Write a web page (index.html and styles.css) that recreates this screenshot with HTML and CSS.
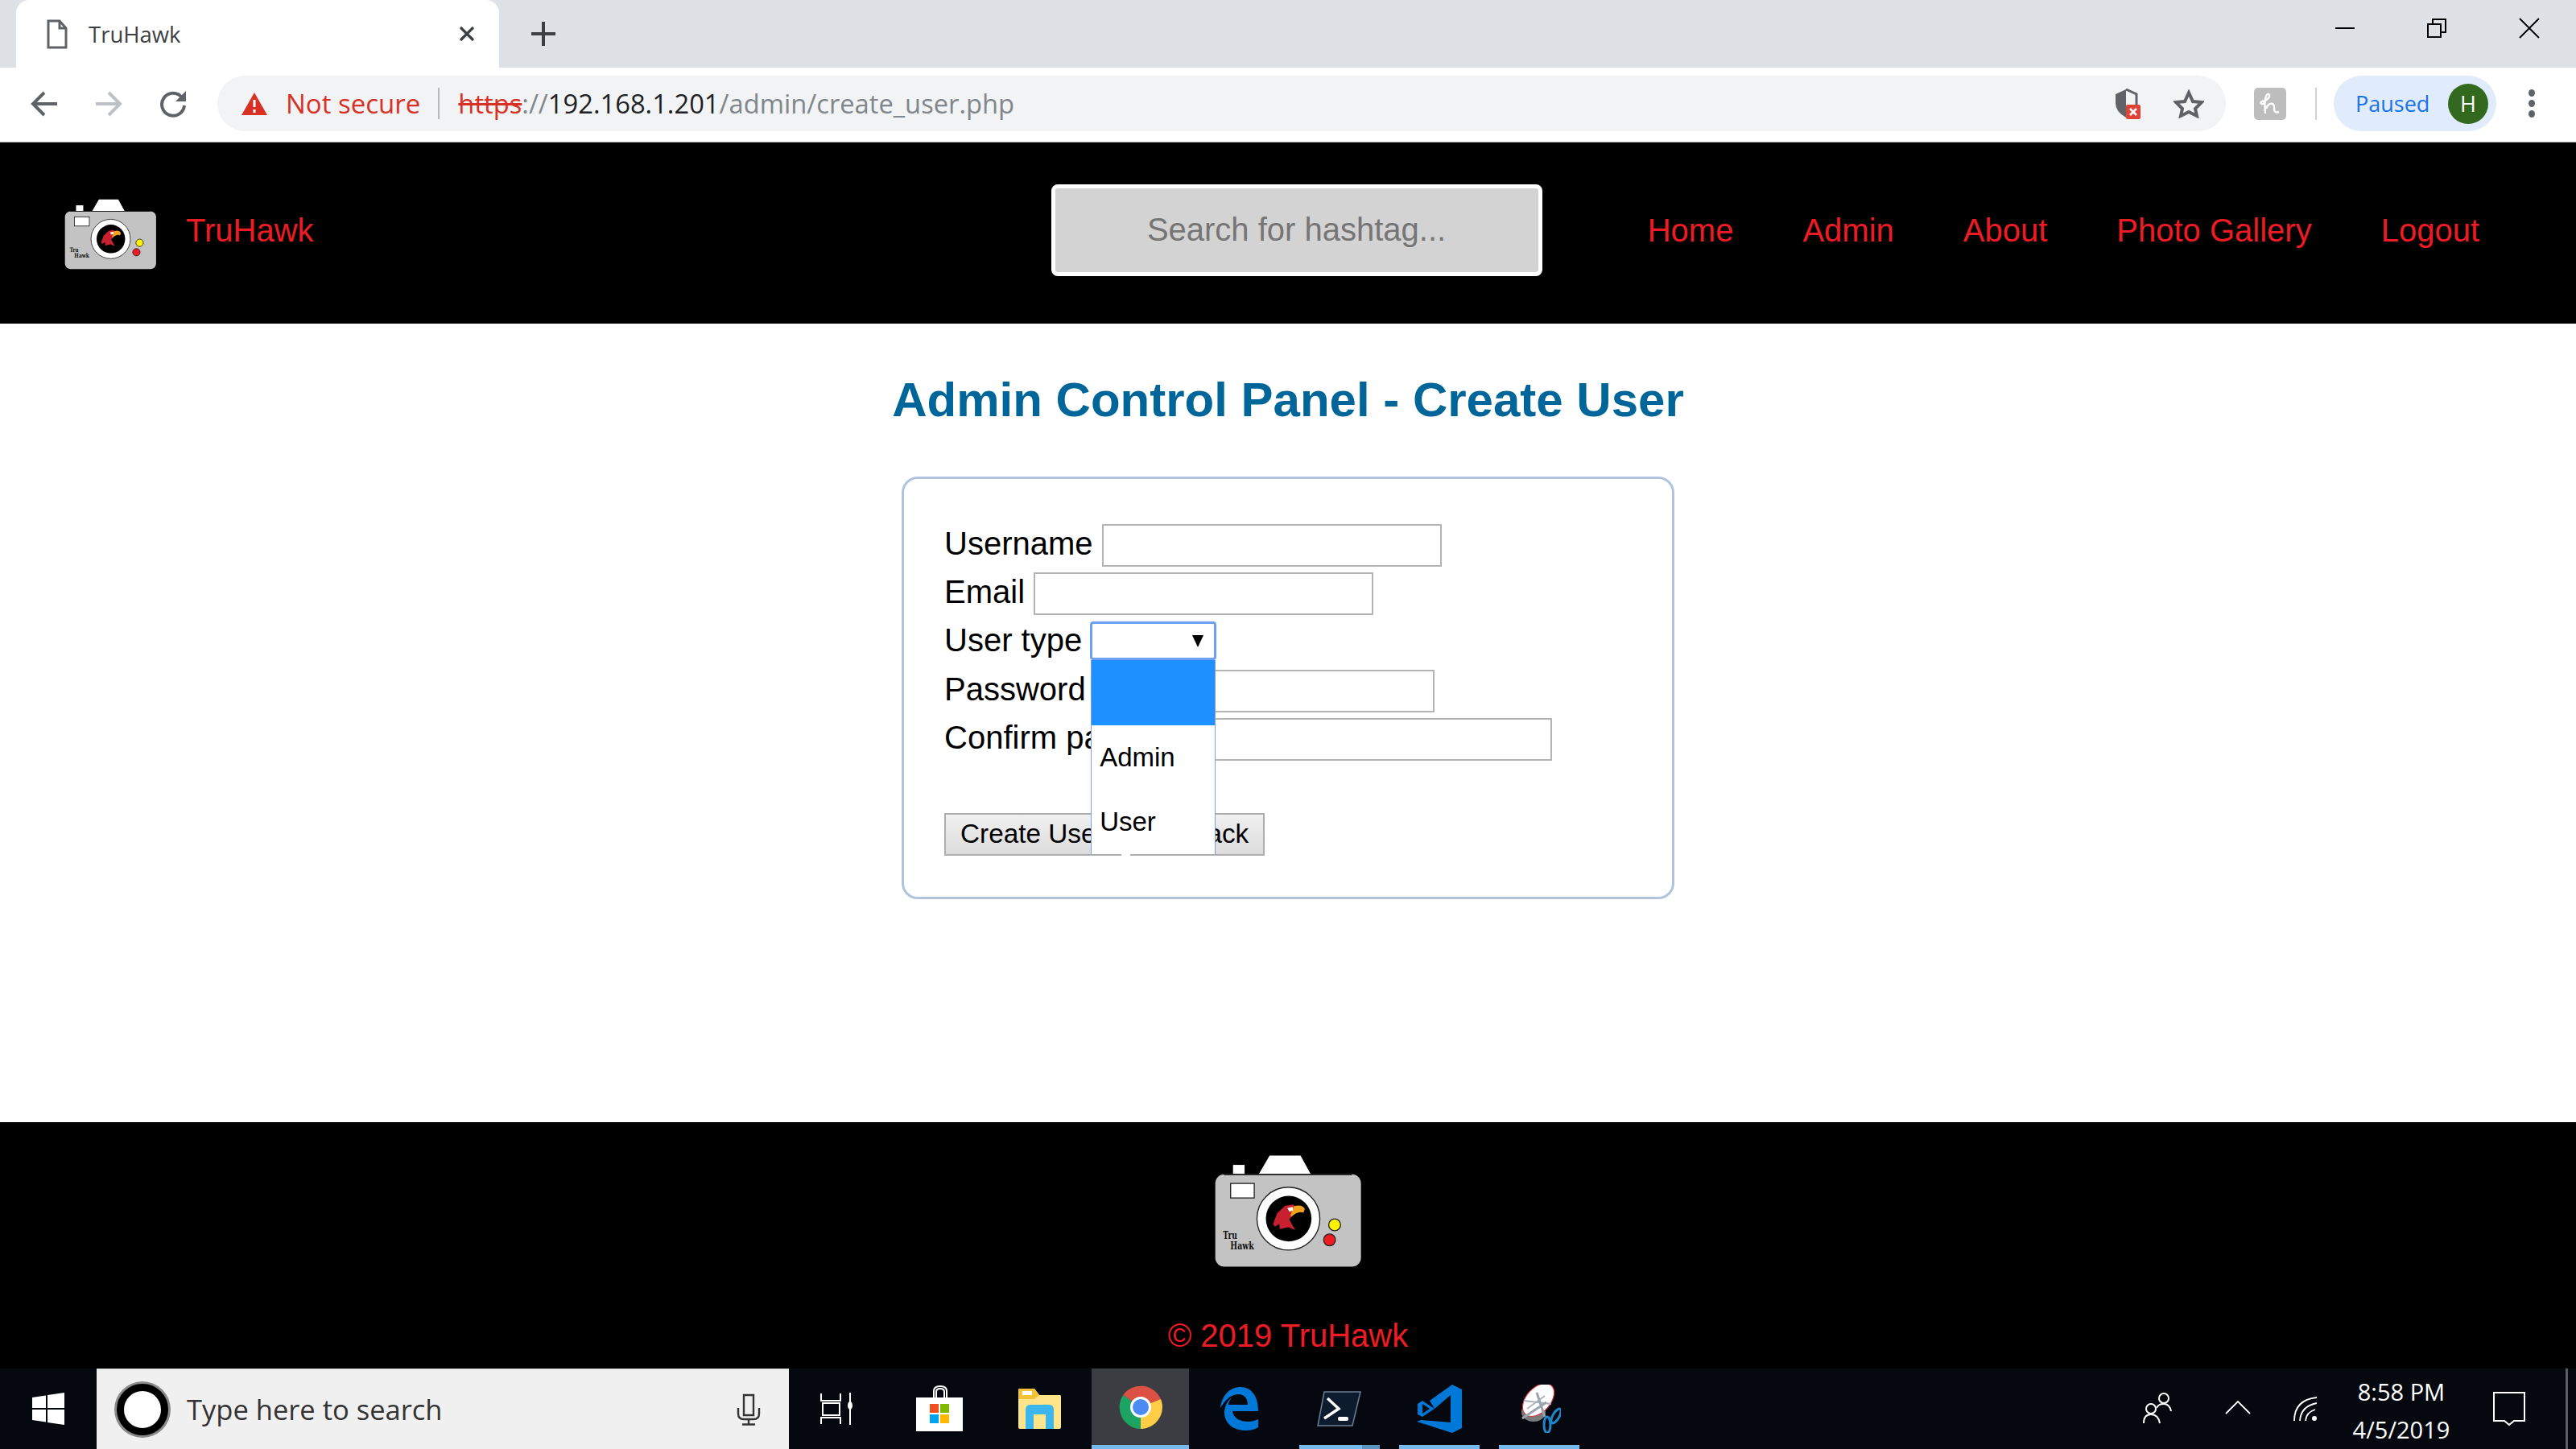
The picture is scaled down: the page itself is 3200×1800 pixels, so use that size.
FILE: index.html
```html
<!DOCTYPE html>
<html lang="en">
<head>
<meta charset="utf-8">
<title>TruHawk</title>
<link rel="stylesheet" href="styles.css">
</head>
<body>

<div class="tabstrip">
  <div class="tab">
    <svg class="tab-doc" viewBox="0 0 26 37" width="26" height="37"><path d="M2 2H16L24 11V35H2Z M16 2V11H24" fill="none" stroke="#5f6368" stroke-width="3"/></svg>
    <span class="tab-title">TruHawk</span>
    <svg class="tab-close" viewBox="0 0 20 20" width="20" height="20"><path d="M2 2L18 18M18 2L2 18" stroke="#3c4043" stroke-width="3.2"/></svg>
  </div>
  <svg class="new-tab" viewBox="0 0 30 30" width="30" height="30"><path d="M15 0V30M0 15H30" stroke="#3c4043" stroke-width="4"/></svg>
  <div class="win-controls">
    <svg viewBox="0 0 24 24" width="24" height="24"><path d="M0 12H24" stroke="#000" stroke-width="2"/></svg>
    <svg viewBox="0 0 24 24" width="24" height="24"><path d="M1 7H17V23H1ZM7 7V1H23V17H17" fill="none" stroke="#000" stroke-width="2"/></svg>
    <svg viewBox="0 0 26 26" width="26" height="26"><path d="M1 1L25 25M25 1L1 25" stroke="#000" stroke-width="1.8"/></svg>
  </div>
</div>

<div class="toolbar">
  <div class="nav-buttons">
    <svg viewBox="0 0 34 32" width="34" height="32"><path d="M33 16H4M17 2L3 16L17 30" fill="none" stroke="#5f6368" stroke-width="4"/></svg>
    <svg viewBox="0 0 34 32" width="34" height="32"><path d="M1 16H30M17 2L31 16L17 30" fill="none" stroke="#bdc1c6" stroke-width="4"/></svg>
    <svg viewBox="0 0 34 34" width="34" height="34"><path d="M28 9A14 14 0 1 0 31 19" fill="none" stroke="#5f6368" stroke-width="4"/><path d="M33 1V14H20Z" fill="#5f6368"/></svg>
  </div>
  <div class="omnibox">
    <svg class="warn" viewBox="0 0 32 28" width="32" height="28"><path d="M16 0L32 28H0Z" fill="#d93025"/><path d="M16 9V18M16 21V25" stroke="#fff" stroke-width="3"/></svg>
    <span class="not-secure">Not secure</span>
    <span class="omni-div"></span>
    <span class="url"><span class="scheme">https</span><span class="url-dim">://</span><span class="host">192.168.1.201</span><span class="url-dim">/admin/create_user.php</span></span>
    <svg class="shield" viewBox="0 0 32 38" width="32" height="38"><path d="M14 1L1 7V18Q1 29 14 36Z" fill="#5f6368"/><path d="M14 1L27 7V20" fill="none" stroke="#5f6368" stroke-width="3"/><rect x="14" y="20" width="18" height="18" rx="2" fill="#e04335"/><path d="M19 25L27 33M27 25L19 33" stroke="#fff" stroke-width="2.6"/></svg>
    <svg class="star" viewBox="0 0 38 36" width="38" height="36"><path d="M19 4L24 15L35 16L27 24L29 33L19 28L9 33L11 24L3 16L14 15Z" fill="none" stroke="#5f6368" stroke-width="4"/></svg>
  </div>
  <svg class="ext" viewBox="0 0 40 40" width="40" height="40"><rect width="40" height="40" rx="5" fill="#bdbdbd"/><path d="M14 32C13 20 13 10 17 8C21 7 20 15 10 17C7 18 9 22 13 19M15 26C18 18 25 18 25 24C25 28 25 32 31 30" fill="none" stroke="#fff" stroke-width="2.4"/></svg>
  <span class="tool-div"></span>
  <div class="paused">
    <span class="paused-text">Paused</span>
    <span class="avatar">H</span>
  </div>
  <div class="kebab"><i></i><i></i><i></i></div>
</div>

<header class="site-header">
  <svg class="header-logo" viewBox="200 100 560 428">
    <polygon points="410,107 525,107 563,176 370,176" fill="#fff"/>
    <rect x="274" y="142" width="43" height="34" fill="#fff"/>
    <rect x="208" y="177" width="542" height="344" rx="34" fill="#c3c3c3"/>
    <path d="M240 178H716" stroke="#222" stroke-width="5"/>
    <rect x="265" y="211" width="88" height="54" fill="#fff" stroke="#222" stroke-width="4"/>
    <circle cx="480" cy="342" r="117" fill="#fff" stroke="#222" stroke-width="4"/>
    <circle cx="481" cy="342" r="85" fill="#000"/>
    <path d="M423 362L438 322L468 294L498 289L506 300L494 332L483 345L505 384L480 374L448 381L446 362L430 372Z" fill="#c8202f"/>
    <path d="M500 296Q530 286 541 306L536 320Q515 312 490 336L488 328Z" fill="#f4a11d"/>
    <path d="M476 303L496 298L497 312L484 316Z" fill="#fff"/>
    <circle cx="652" cy="365" r="22" fill="#fff200" stroke="#222" stroke-width="4"/>
    <circle cx="633" cy="421" r="22" fill="#ed1c24" stroke="#222" stroke-width="4"/>
    <text x="237" y="418" class="logo-text" textLength="52" lengthAdjust="spacingAndGlyphs">Tru</text>
    <text x="264" y="455" class="logo-text" textLength="88" lengthAdjust="spacingAndGlyphs">Hawk</text>
  </svg>
  <a class="brand">TruHawk</a>
  <div class="search">Search for hashtag...</div>
  <nav class="site-nav">
    <a>Home</a><a>Admin</a><a>About</a><a>Photo Gallery</a><a>Logout</a>
  </nav>
</header>

<main class="content">
  <h1 class="title">Admin Control Panel - Create User</h1>
  <form class="panel">
    <div class="row"><label>Username</label><span class="field"></span></div>
    <div class="row"><label>Email</label><span class="field"></span></div>
    <div class="row"><label>User type</label>
      <div class="select">
        <span class="arrow"></span>
        <div class="dropdown">
          <div class="option selected"></div>
          <div class="option">Admin</div>
          <div class="option">User</div>
        </div>
      </div>
    </div>
    <div class="row"><label>Password</label><span class="field"></span></div>
    <div class="row"><label>Confirm password</label><span class="field"></span></div>
    <div class="actions">
      <button type="button" class="btn">Create User</button>
      <button type="button" class="btn">Go Back</button>
    </div>
  </form>
</main>

<footer class="site-footer">
  <svg class="footer-logo" viewBox="200 100 560 428">
    <polygon points="410,107 525,107 563,176 370,176" fill="#fff"/>
    <rect x="274" y="142" width="43" height="34" fill="#fff"/>
    <rect x="208" y="177" width="542" height="344" rx="34" fill="#c3c3c3"/>
    <path d="M240 178H716" stroke="#222" stroke-width="5"/>
    <rect x="265" y="211" width="88" height="54" fill="#fff" stroke="#222" stroke-width="4"/>
    <circle cx="480" cy="342" r="117" fill="#fff" stroke="#222" stroke-width="4"/>
    <circle cx="481" cy="342" r="85" fill="#000"/>
    <path d="M423 362L438 322L468 294L498 289L506 300L494 332L483 345L505 384L480 374L448 381L446 362L430 372Z" fill="#c8202f"/>
    <path d="M500 296Q530 286 541 306L536 320Q515 312 490 336L488 328Z" fill="#f4a11d"/>
    <path d="M476 303L496 298L497 312L484 316Z" fill="#fff"/>
    <circle cx="652" cy="365" r="22" fill="#fff200" stroke="#222" stroke-width="4"/>
    <circle cx="633" cy="421" r="22" fill="#ed1c24" stroke="#222" stroke-width="4"/>
    <text x="237" y="418" class="logo-text" textLength="52" lengthAdjust="spacingAndGlyphs">Tru</text>
    <text x="264" y="455" class="logo-text" textLength="88" lengthAdjust="spacingAndGlyphs">Hawk</text>
  </svg>
  <p class="copy">© 2019 TruHawk</p>
</footer>

<div class="taskbar">
  <div class="start">
    <svg viewBox="0 0 40 40" width="40" height="40"><path d="M0 6L17 3.500V19H0ZM19 3L40 0V19H19ZM0 21H17V36.500L0 34ZM19 21H40V40L19 37Z" fill="#fff"/></svg>
  </div>
  <div class="task-search">
    <span class="cortana"></span>
    <span class="task-search-text">Type here to search</span>
    <svg class="mic" viewBox="0 0 30 40" width="30" height="40"><path d="M9 2H21V27H9ZM2 18V25Q2 32 9 32H21Q28 32 28 25V18M15 32V38M7 38.500H23" fill="none" stroke="#333" stroke-width="2.400"/></svg>
  </div>
  <div class="task-tile first">
    <svg viewBox="0 0 42 40" width="42" height="40"><path d="M2 1V10H26V1M2 39V31H26V39M4 13H25V28H4ZM38 0V40" fill="none" stroke="#fff" stroke-width="2"/><ellipse cx="38" cy="16" rx="3" ry="5" fill="#fff"/></svg>
  </div>
  <div class="task-tile">
    <svg viewBox="0 0 60 60" width="60" height="60"><path d="M22 16V8Q22 2 30 2Q38 2 38 8V16M25 16V9Q25 5 30 5Q35 5 35 9V16" fill="none" stroke="#fff" stroke-width="2"/><path d="M0 16H58V58H0Z" fill="#fff"/><rect x="17" y="24" width="11" height="11" fill="#f25022"/><rect x="30" y="24" width="11" height="11" fill="#7fba00"/><rect x="17" y="37" width="11" height="11" fill="#00a4ef"/><rect x="30" y="37" width="11" height="11" fill="#ffb900"/></svg>
  </div>
  <div class="task-tile">
    <svg viewBox="0 0 54 50" width="54" height="50"><path d="M0 2Q0 0 2 0H20L26 8H52Q53 8 53 10V48Q53 50 51 50H2Q0 50 0 48Z" fill="#ffe48a"/><path d="M0 2Q0 0 2 0H20L26 8L20 13H0Z" fill="#f3c237"/><rect x="5" y="3" width="12" height="5" fill="#fff"/><path d="M9 50V26Q9 20 15 20H38Q44 20 44 26V50H34V32H19V50Z" fill="#3bb6ee"/></svg>
  </div>
  <div class="task-tile active">
    <svg viewBox="0 0 56 56" width="56" height="56"><path d="M28 28L6.200 13A27 27 0 0 1 53 18Z" fill="#dd5044"/><path d="M28 28L6.200 13A27 27 0 0 0 28 55Z" fill="#1da462"/><path d="M28 28L53 18A27 27 0 0 1 28 55Z" fill="#ffcd46"/><circle cx="28" cy="28" r="13" fill="#fff"/><circle cx="28" cy="28" r="10" fill="#4c8bf5"/></svg>
  </div>
  <div class="task-tile">
    <svg viewBox="0 0 50 54" width="50" height="54"><path d="M2 26C4 8 16 0 27 0C41 0 49 12 49 30H17C18 39 27 43 36 43C41 43 45 42 49 40V50C44 53 39 54 33 54C15 54 6 42 7 30C8 22 11 17 16 13C13 17 12 20 12 22H36C36 14 31 9 25 9C15 9 8 16 2 26Z" fill="#0078d7"/></svg>
  </div>
  <div class="task-tile open stacked">
    <svg viewBox="0 0 56 44" width="56" height="44"><path d="M10 1H55L45 43H2Z" fill="#0d1b2f" stroke="#6e7f95" stroke-width="1.500"/><path d="M14 9L28 22L10 34" fill="none" stroke="#fff" stroke-width="3.500"/><rect x="27" y="32" width="13" height="5" rx="2" fill="#fff"/></svg>
  </div>
  <div class="task-tile open">
    <svg viewBox="-3 0 60 60" width="60" height="60"><path d="M44 0L56 6V54L44 60L0 46L5 44L42 47V13L22 30L7 40L1 37V24L7 20L22 30L16 20Z" fill="#0078d7"/><path d="M16 30L7 24V36ZM42 18L26 30L42 40Z" fill="#05090f"/></svg>
  </div>
  <div class="task-tile open">
    <svg viewBox="0 0 56 60" width="56" height="60"><ellipse cx="22" cy="34" rx="15" ry="12" fill="#7c7c7c"/><ellipse cx="28" cy="19" rx="24" ry="15" transform="rotate(-48 28 19)" fill="#fff" stroke="#d9333f" stroke-width="1.200"/><path d="M10 20L44 24M14 30L36 14" stroke="#aab4bc" stroke-width="2"/><path d="M26 10L36 40M8 42L38 22" stroke="#9aa4ab" stroke-width="3"/><ellipse cx="39" cy="50" rx="4" ry="10" fill="none" stroke="#1d87c9" stroke-width="3"/><ellipse cx="50" cy="39" rx="4" ry="10" transform="rotate(30 50 39)" fill="none" stroke="#1d87c9" stroke-width="3"/></svg>
  </div>
  <div class="tray">
    <svg class="tray-people" viewBox="0 0 36 40" width="36" height="40"><circle cx="26" cy="8" r="6" fill="none" stroke="#fff" stroke-width="2"/><path d="M17 20Q19 15 26 15Q33 15 35 24" fill="none" stroke="#fff" stroke-width="2"/><circle cx="10" cy="21" r="6" fill="none" stroke="#fff" stroke-width="2"/><path d="M1 39Q1 28 10 28Q19 28 21 39" fill="none" stroke="#fff" stroke-width="2"/></svg>
    <svg class="tray-chevron" viewBox="0 0 32 18" width="32" height="18"><path d="M1 17L16 2L31 17" fill="none" stroke="#fff" stroke-width="1.800"/></svg>
    <svg class="tray-wifi" viewBox="0 0 30 30" width="30" height="30"><path d="M2 30Q2 4 30 1M9 30Q10 12 30 8M16 30Q17 19 28 16" fill="none" stroke="#fff" stroke-width="1.800"/><circle cx="27" cy="27" r="3" fill="#fff"/></svg>
    <div class="clock"><span>8:58 PM</span><span>4/5/2019</span></div>
    <svg class="tray-note" viewBox="0 0 40 42" width="40" height="42"><path d="M1 1H39V36H26L20 41L14 36H1Z" fill="none" stroke="#fff" stroke-width="2"/></svg>
    <span class="show-desktop"></span>
  </div>
</div>
</body>
</html>
```

FILE: styles.css
```css
* { box-sizing: border-box; }
html, body { margin: 0; padding: 0; }
body {
  width: 3200px;
  height: 1800px;
  display: flex;
  flex-direction: column;
  overflow: hidden;
  font-family: "Liberation Sans", Arial, sans-serif;
  background: #fff;
}
.logo-text { font-family: "DejaVu Serif", serif; font-weight: 700; font-size: 36px; fill: #111; }

/* Browser chrome */
.tabstrip {
  height: 84px;
  flex: none;
  background: #dee1e6;
  display: flex;
  align-items: center;
}
.tab {
  width: 600px;
  height: 84px;
  margin-left: 20px;
  background: #fff;
  border-radius: 16px 16px 0 0;
  display: flex;
  align-items: center;
  padding-left: 38px;
}
.tab-title {
  margin-left: 26px;
  font-family: "Open Sans", sans-serif;
  font-size: 27.500px;
  color: #3c4043;
}
.tab-close { margin-left: auto; margin-right: 30px; }
.new-tab { margin-left: 40px; }
.win-controls {
  margin-left: auto;
  display: flex;
  align-items: center;
  gap: 90px;
  margin-right: 45px;
  margin-top: -14px;
}
.toolbar {
  height: 93px;
  flex: none;
  background: #fff;
  border-bottom: 1px solid #b5b5b5;
  display: flex;
  align-items: center;
}
.nav-buttons {
  width: 270px;
  flex: none;
  display: flex;
  align-items: center;
  gap: 46px;
  padding-left: 38px;
  margin-top: -3px;
}
.omnibox {
  width: 2495px;
  height: 69px;
  flex: none;
  margin-top: -3px;
  background: #f1f3f4;
  border-radius: 35px;
  display: flex;
  align-items: center;
  padding-left: 30px;
  font-family: "Open Sans", sans-serif;
  font-size: 33px;
}
.not-secure { margin-left: 23px; color: #d93025; }
.omni-div { width: 2px; height: 39px; background: #b5b8bc; margin: 0 23px 0 22px; }
.url { color: #80868b; font-size: 32.700px; }
.scheme { color: #d93025; text-decoration: line-through; }
.url-dim { color: #80868b; }
.host { color: #202124; }
.shield { margin-left: auto; margin-right: 41px; }
.star { margin-right: 27px; }
.ext { margin-left: 35px; margin-top: -3px; flex: none; }
.tool-div { width: 2px; height: 40px; margin: -3px 21px 0 36px; background: #d0d2d5; }
.paused {
  width: 202px;
  height: 69px;
  margin-top: -3px;
  background: #e0ecfb;
  border-radius: 35px;
  display: flex;
  align-items: center;
  padding-left: 27px;
  font-family: "Open Sans", sans-serif;
  font-size: 27px;
  color: #1a73e8;
}
.avatar {
  width: 50px;
  height: 50px;
  margin-left: auto;
  margin-right: 10px;
  border-radius: 50%;
  background: #33691e;
  color: #fff;
  font-size: 27px;
  display: flex;
  align-items: center;
  justify-content: center;
}
.kebab {
  margin-left: 40px;
  margin-top: -3px;
  display: flex;
  flex-direction: column;
  gap: 4px;
}
.kebab i { display: block; width: 8px; height: 9px; border-radius: 50%; background: #5f6368; }

/* Site header */
.site-header {
  height: 225px;
  flex: none;
  background: #000;
  display: flex;
  align-items: center;
  padding: 0 120px 6px 79px;
  font-size: 40px;
  color: #ed1c24;
}
.header-logo { width: 117px; height: 90px; margin-top: 8px; flex: none; }
.brand { margin-left: 35px; }
.search {
  width: 610px;
  height: 114px;
  margin-left: 916px;
  margin-bottom: 2px;
  background: #d3d3d3;
  border: 5px solid #fff;
  border-radius: 8px;
  color: #757575;
  display: flex;
  align-items: center;
  justify-content: center;
}
.site-nav { margin-left: auto; display: flex; gap: 86px; }

/* Content */
.content {
  flex: 1;
  background: #fff;
  padding-top: 60px;
}
.title {
  margin: 0;
  text-align: center;
  font-size: 60px;
  line-height: 69px;
  font-weight: 700;
  color: #006699;
}
.panel {
  width: 960px;
  height: 525px;
  margin: 61px auto 0;
  border: 3px solid #b0c4de;
  border-radius: 20px;
  padding: 52px 50px 0;
  font-size: 40px;
  color: #000;
}
.row { height: 60.400px; display: flex; align-items: center; }
.row label { margin-top: -4px; }
.field {
  width: 422px;
  height: 53px;
  margin-left: 11px;
  background: #fff;
  border: 2px solid #b4b4b4;
}
.select {
  position: relative;
  width: 157px;
  height: 48px;
  margin-left: 10px;
  margin-top: -3px;
  background: #fff;
  border: 3px solid #6ea0f2;
  border-radius: 4px;
}
.arrow {
  position: absolute;
  right: 13px;
  top: 14px;
  border-style: solid;
  border-width: 15px 7px 0;
  border-color: #000 transparent transparent;
}
.dropdown {
  position: absolute;
  left: -2px;
  top: 45px;
  width: 155px;
  background: #fff;
  border-left: 1px solid #7c9fe0;
  border-right: 1px solid #7c9fe0;
  font-size: 33px;
  z-index: 2;
}
.option { height: 80px; padding-left: 10px; display: flex; align-items: center; }
.option.selected { height: 81px; background: #1e90ff; }
.actions { display: flex; gap: 11px; margin-top: 61px; }
.btn {
  height: 53px;
  padding: 0 18px;
  font: 33.300px "Liberation Sans", Arial, sans-serif;
  color: #000;
  background: linear-gradient(#f0f0f0, #dcdcdc);
  border: 2px solid #adadad;
}

/* Footer */
.site-footer {
  height: 306px;
  flex: none;
  background: #000;
  display: flex;
  flex-direction: column;
  align-items: center;
  padding-top: 39px;
  font-size: 40px;
  color: #ed1c24;
}
.footer-logo { width: 187px; height: 143px; flex: none; }
.copy { margin: 60px 0 0; line-height: 46px; }

/* Windows taskbar */
.taskbar {
  height: 100px;
  flex: none;
  background: #05090f;
  display: flex;
  align-items: stretch;
}
.start { width: 120px; display: flex; align-items: center; padding-left: 40px; }
.task-search {
  width: 860px;
  background: #f0f0f0;
  border-top: 1px solid #c8c8c8;
  display: flex;
  align-items: center;
  padding-left: 25px;
}
.cortana {
  width: 64px;
  height: 64px;
  border-radius: 50%;
  background: #fff;
  border: 9px solid #000;
  box-shadow: 0 0 0 3px #8a8a8a;
  flex: none;
}
.task-search-text {
  margin-left: 23px;
  font-family: "Open Sans", sans-serif;
  font-size: 34.500px;
  color: #333;
}
.mic { margin-left: auto; margin-right: 35px; }
.task-tile {
  width: 124px;
  flex: none;
  display: flex;
  align-items: center;
  justify-content: center;
  position: relative;
}
.task-tile.first { width: 118px; margin-right: 8px; }
.task-tile.active { width: 121px; margin-left: 2px; background: #3b3d42; border-bottom: 5px solid #76b9ed; }
.task-tile.open::after {
  content: "";
  position: absolute;
  left: 13px;
  right: 11px;
  bottom: 0;
  height: 5px;
  background: #76b9ed;
}
.task-tile.stacked::after { background: linear-gradient(90deg, #76b9ed 78%, #5b93c1 78%); }
.tray {
  margin-left: auto;
  display: flex;
  align-items: center;
  color: #fff;
}
.tray-chevron { margin-left: 66px; margin-top: -4px; }
.tray-wifi { margin-left: 52px; }
.tray-people { margin-top: -2px; }
.clock {
  width: 170px;
  margin-left: 20px;
  margin-top: 4px;
  display: flex;
  flex-direction: column;
  align-items: center;
  gap: 15px;
  font-family: "Open Sans", sans-serif;
  font-size: 29px;
  line-height: 32px;
}
.tray-note { margin-left: 29px; }
.show-desktop { width: 3px; height: 100px; margin-left: 50px; margin-right: 10px; background: #5c5f63; }
```
